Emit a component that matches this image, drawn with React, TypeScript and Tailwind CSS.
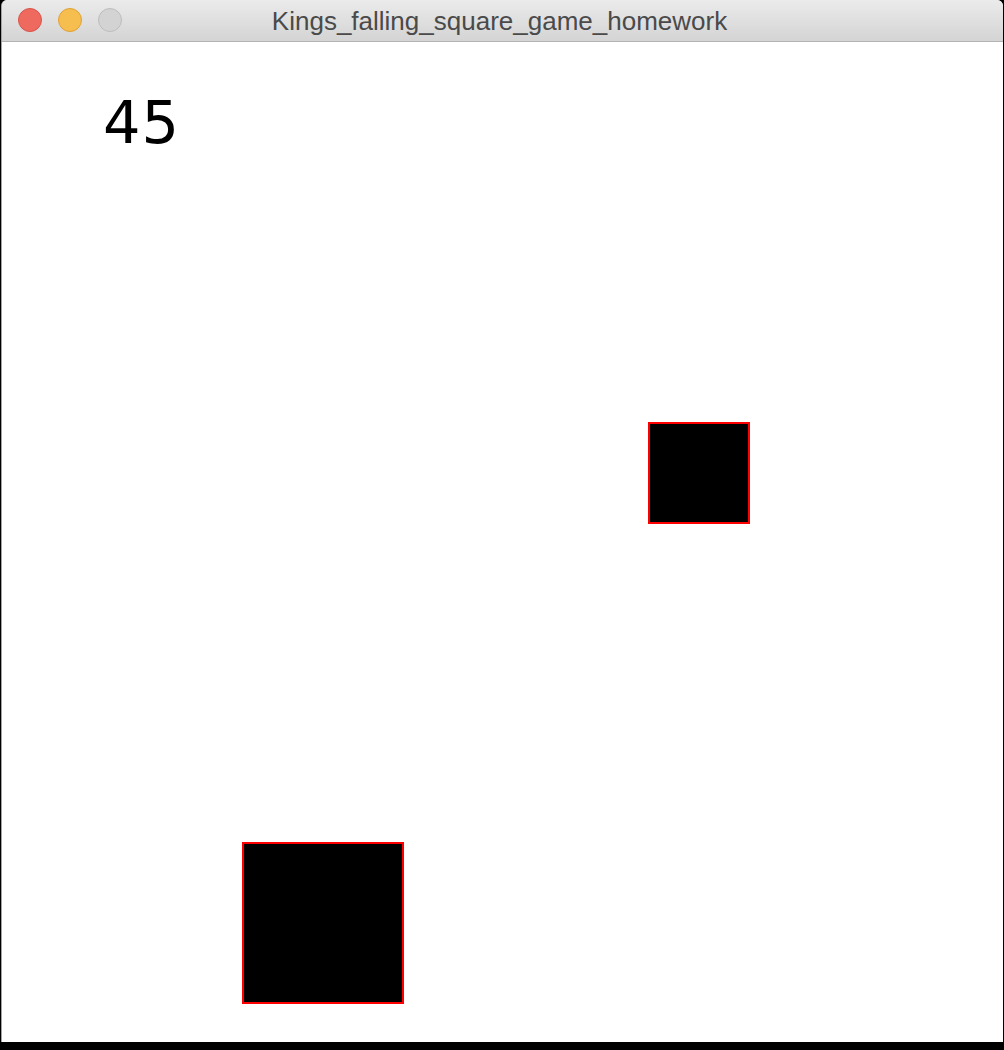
export default function App() {
  return (
    <div className="w-[1004px] h-[1050px] bg-black flex flex-col">
      <div className="ml-[1px] w-[1002px] rounded-t-[6px] overflow-hidden border-l border-[#a3a3a3] bg-white">
        {/* title bar */}
        <div className="relative h-[42px] bg-gradient-to-b from-[#ebebeb] to-[#d4d4d4] border-b border-[#b3b3b3] flex items-center justify-center">
          <div className="absolute left-[16px] top-[8px] flex gap-[16px]">
            <span className="w-[24px] h-[24px] rounded-full bg-[#ee6a5e] border border-[#d9534a]" />
            <span className="w-[24px] h-[24px] rounded-full bg-[#f6be4f] border border-[#dea236]" />
            <span className="w-[24px] h-[24px] rounded-full bg-[#d3d3d3] border border-[#bdbdbd]" />
          </div>
          <span className="text-[26px] text-[#4a4a4a] font-['Liberation_Sans',Arial,sans-serif] leading-none pt-[1px] pr-[6px]">
            Kings_falling_square_game_homework
          </span>
        </div>

        {/* game canvas */}
        <div className="relative h-[1000px] w-[1000px] bg-white">
          <div className="absolute left-[101px] top-[51px] text-[59px] tracking-[1px] leading-none text-black font-['DejaVu_Sans',sans-serif]">
            45
          </div>
          <div className="absolute left-[646px] top-[380px] w-[102px] h-[102px] bg-black border-2 border-[#ff0000]" />
          <div className="absolute left-[240px] top-[800px] w-[162px] h-[162px] bg-black border-2 border-[#ff0000]" />
        </div>
      </div>
    </div>
  );
}
